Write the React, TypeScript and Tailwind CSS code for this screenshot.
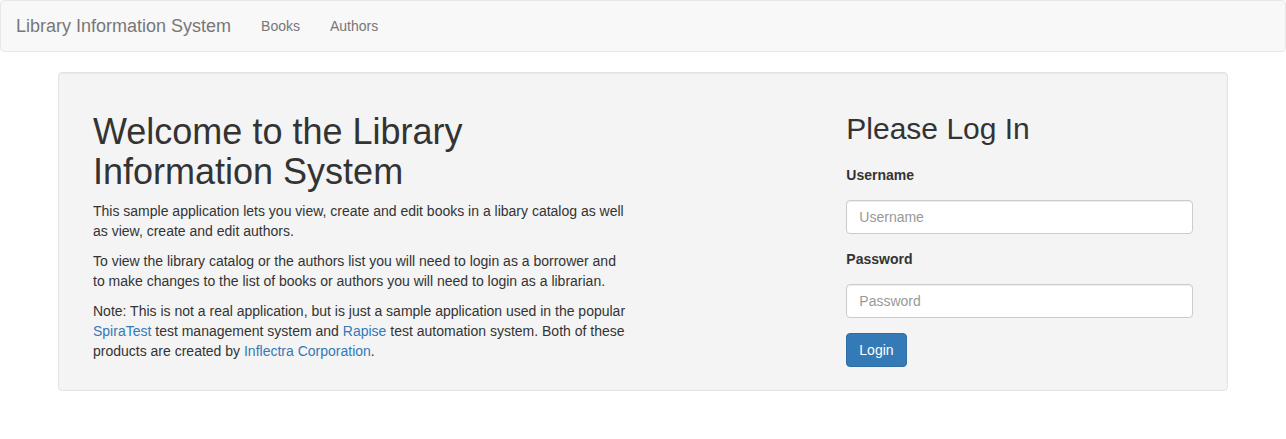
import { useState } from "react";

const font = "font-['Liberation_Sans',Arial,Helvetica,sans-serif]";

const Navbar = () => (
  <nav className="h-[52px] border border-[#e7e7e7] bg-[#f8f8f8] rounded-[4px] flex items-stretch">
    <a href="#" className="px-[15px] flex items-center text-[18px] leading-[20px] text-[#777]">
      Library Information System
    </a>
    <ul className="flex">
      <li>
        <a href="#" className="h-full px-[15px] flex items-center text-[14px] leading-[20px] text-[#777]">
          Books
        </a>
      </li>
      <li>
        <a href="#" className="h-full px-[15px] flex items-center text-[14px] leading-[20px] text-[#777]">
          Authors
        </a>
      </li>
    </ul>
  </nav>
);

const LoginForm = () => {
  const [username, setUsername] = useState("");
  const [password, setPassword] = useState("");

  return (
    <form onSubmit={(e) => e.preventDefault()}>
      <h2 className="mt-[20px] mb-[20px] text-[30px] leading-[33px] font-normal text-[#333]">
        Please Log In
      </h2>
      <div className="mb-[15px]">
        <label htmlFor="username" className="block font-bold text-[14px] leading-[20px] text-[#333]">
          Username
        </label>
      </div>
      <div className="mb-[15px]">
        <input
          id="username"
          type="text"
          placeholder="Username"
          value={username}
          onChange={(e) => setUsername(e.target.value)}
          className="block w-full h-[34px] px-[12px] py-[6px] bg-white border border-[#ccc] rounded-[4px] text-[14px] leading-[20px] text-[#555] placeholder:text-[#999] shadow-[inset_0_1px_1px_rgba(0,0,0,0.075)] outline-none"
        />
      </div>
      <div className="mb-[15px]">
        <label htmlFor="password" className="block font-bold text-[14px] leading-[20px] text-[#333]">
          Password
        </label>
      </div>
      <div className="mb-[15px]">
        <input
          id="password"
          type="password"
          placeholder="Password"
          value={password}
          onChange={(e) => setPassword(e.target.value)}
          className="block w-full h-[34px] px-[12px] py-[6px] bg-white border border-[#ccc] rounded-[4px] text-[14px] leading-[20px] text-[#555] placeholder:text-[#999] shadow-[inset_0_1px_1px_rgba(0,0,0,0.075)] outline-none"
        />
      </div>
      <button
        type="submit"
        className="h-[34px] px-[12px] py-[6px] bg-[#337ab7] border border-[#2e6da4] rounded-[4px] text-white text-[14px] leading-[20px]"
      >
        Login
      </button>
    </form>
  );
};

export default function App() {
  return (
    <div className={`${font} bg-white min-h-[439px] text-[14px] leading-[20px] text-[#333]`}>
      <Navbar />
      <div className="w-[1170px] mx-auto mt-[20px] bg-[#f4f4f4] border border-[#e3e3e3] rounded-[4px] p-[19px] shadow-[inset_0_1px_1px_rgba(0,0,0,0.05)]">
        <div className="grid grid-cols-12">
          <div className="col-span-6 px-[15px]">
            <h1 className="mt-[20px] mb-[10px] text-[36px] leading-[39.6px] font-normal text-[#333]">
              Welcome to the Library Information System
            </h1>
            <p className="mb-[10px]">
              This sample application lets you view, create and edit books in a libary catalog as well as view,
              create and edit authors.
            </p>
            <p className="mb-[10px]">
              To view the library catalog or the authors list you will need to login as a borrower and to make
              changes to the list of books or authors you will need to login as a librarian.
            </p>
            <p className="mb-[10px]">
              Note: This is not a real application, but is just a sample application used in the popular{" "}
              <a href="#" className="text-[#337ab7]">SpiraTest</a> test management system and{" "}
              <a href="#" className="text-[#337ab7]">Rapise</a> test automation system. Both of these products are
              created by <a href="#" className="text-[#337ab7]">Inflectra Corporation</a>.
            </p>
          </div>
          <div className="col-start-9 col-span-4 px-[15px]">
            <LoginForm />
          </div>
        </div>
      </div>
    </div>
  );
}
